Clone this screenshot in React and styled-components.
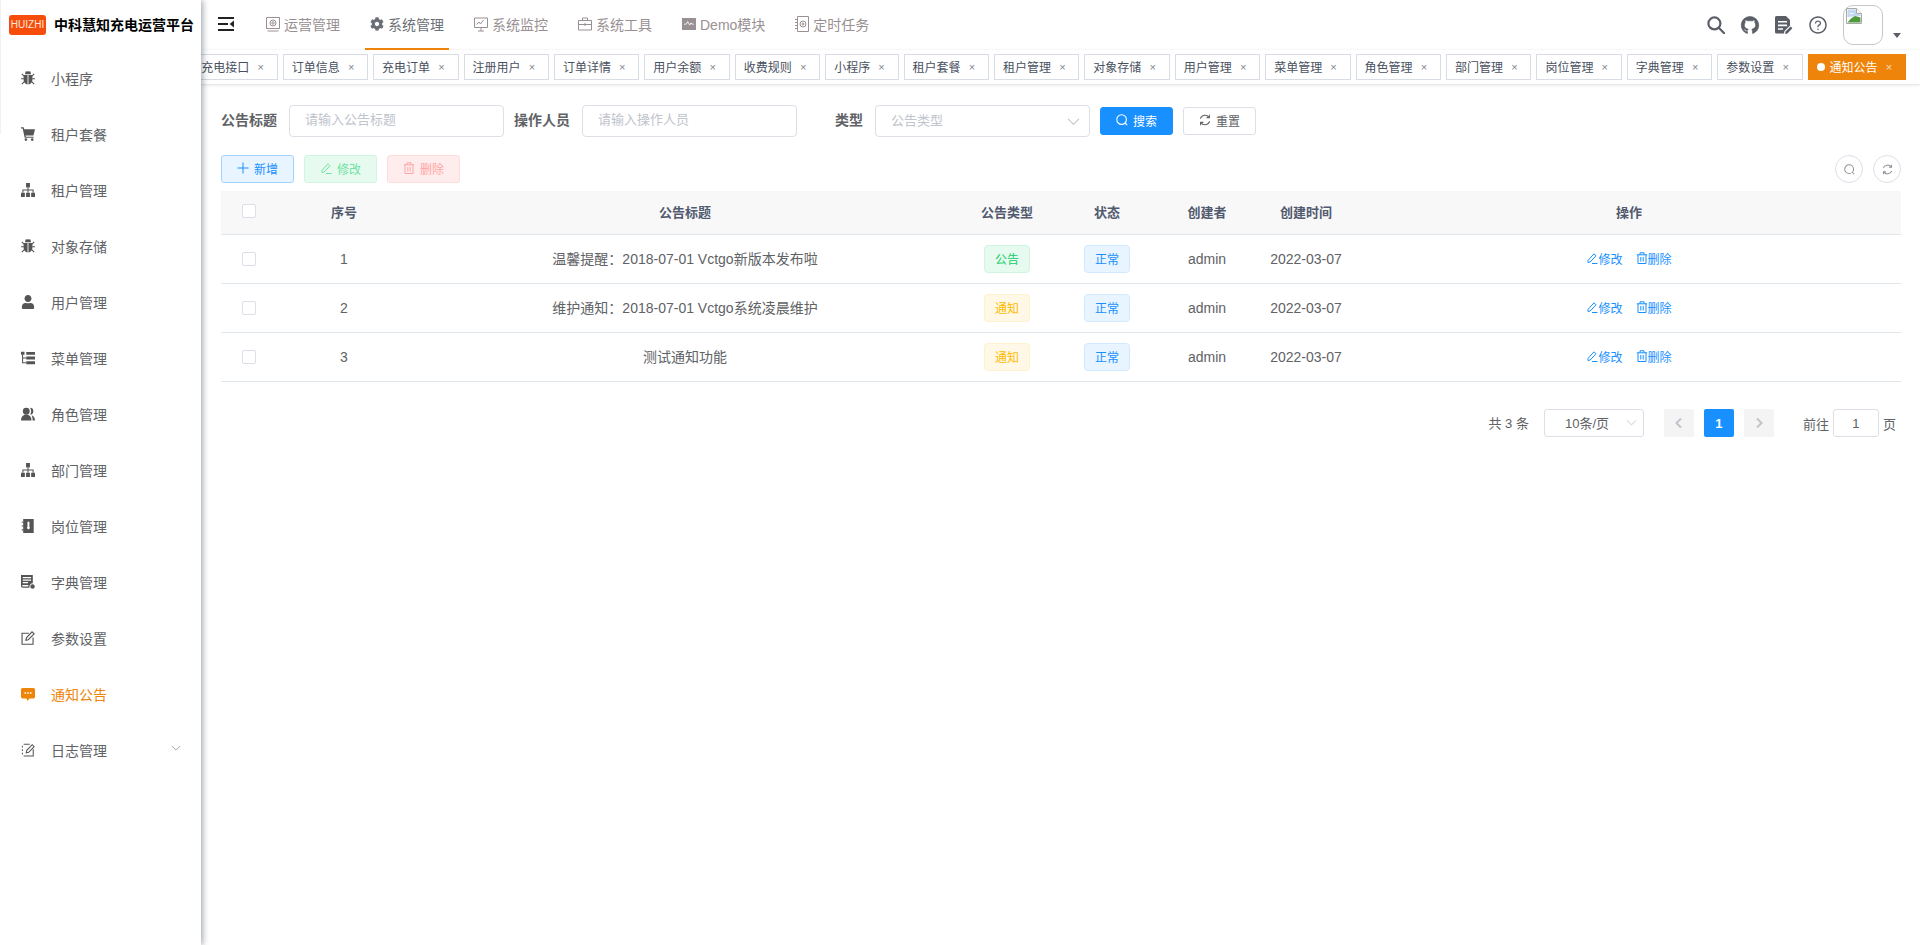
import React from "react"
import styled, { createGlobalStyle } from "styled-components"
import { FaUser, FaCog } from "react-icons/fa"
import { AiOutlineGithub, AiOutlineQuestionCircle } from "react-icons/ai"

const GlobalStyle = createGlobalStyle`
  html, body { margin: 0; padding: 0; height: 100%; background: #fff; }
  body {
    overflow: hidden;
    font-family: "Liberation Sans", "Noto Sans CJK SC", sans-serif;
    color: #606266;
  }
  * { box-sizing: border-box; }
`

// icons

const Svg = styled.svg`
  display: block;
  flex-shrink: 0;
  fill: currentColor;
`

const Line = styled.svg`
  display: block;
  flex-shrink: 0;
  fill: none;
  stroke: currentColor;
  stroke-width: ${p => p.$w || 1};
`

const BugIcon = () => (
  <Svg width="14" height="14" viewBox="0 0 16 16">
    <path d="M4.6 3.8a3.4 3.4 0 0 1 6.800 0z" />
    <path d="M3 4.600h4.500V15.500C5 15.200 3 13.200 3 10.400z" />
    <path d="M8.500 4.600H13v5.800c0 2.800-2 4.800-4.500 5.100z" />
    <path d="M3.400 5.800 1 3.400M3.500 8.800H0M4 11.800 1 14.900M12.600 5.800 15 3.400M12.500 8.800H16M12 11.800l3 3.100M5.400 .6 6.600 2.400M10.600 .6 9.400 2.400" stroke="currentColor" strokeWidth="1.200" fill="none" />
  </Svg>
)

const CartIcon = () => (
  <Svg width="14" height="14" viewBox="0 0 16 16">
    <path d="M0 .4h3l.7 2.200H16l-1.800 7H5.200l.4 1.400h8.800v1.400H4.200L1.900 1.800H0z" />
    <circle cx="5.600" cy="14.400" r="1.500" />
    <circle cx="12.800" cy="14.400" r="1.500" />
  </Svg>
)

const SitemapIcon = () => (
  <Svg width="14" height="14" viewBox="0 0 16 16">
    <path d="M5.800 0h4.400v5H5.800zM0 11h4.400v5H0zM5.800 11h4.400v5H5.800zM11.600 11H16v5h-4.400z" />
    <path d="M8 5v6M2.200 11V8h11.600v3" fill="none" stroke="currentColor" strokeWidth="1.200" />
  </Svg>
)

const PeoplesIcon = () => (
  <Svg width="14" height="14" viewBox="0 0 16 16">
    <circle cx="6" cy="4.800" r="3.900" />
    <path d="M0 15.500c0-4.500 2.500-7 6-7s6 2.500 6 7z" />
    <path d="M10.200 .9a3.900 3.900 0 0 1 0 7.800c.8-1 1.400-2.400 1.400-3.900S11 1.900 10.200.9zM12.300 9.300c2.200.8 3.700 2.900 3.700 6.200h-2.700c0-2.500-.4-4.500-1-6.200z" />
  </Svg>
)

const TreeTableIcon = () => (
  <Svg width="14" height="14" viewBox="0 0 16 16">
    <path d="M0 .8h4v3.400H0zM6 1h10v3.200H6zM6 6.400h10v3.200H6zM6 11.800h10V15H6z" />
    <path d="M1.800 4v9.400h4M1.800 8h4" fill="none" stroke="currentColor" strokeWidth="1.200" />
  </Svg>
)

const PostIcon = () => (
  <Svg width="14" height="14" viewBox="0 0 16 16">
    <path fillRule="evenodd" d="M2.500 0h12v16h-12zM7.400 3.200v5.600a1.600 1.600 0 1 0 2.200 0V3.200z" />
    <path d="M.8 3h2v1.400h-2zM.8 7.300h2v1.400h-2zM.8 11.600h2V13h-2z" />
  </Svg>
)

const DictIcon = () => (
  <Svg width="14" height="14" viewBox="0 0 16 16">
    <path fillRule="evenodd" d="M0 0h13.500v9.500a4 4 0 0 0-3.800 5H2a2 2 0 0 1-2-2zM2 2.400v1.400h9.500V2.400zM2 5.200v1.400h9.500V5.200zM2 8v1.400h6V8zM2 11.400a1 1 0 0 0 0 1.800h6.400v-1.800z" />
    <circle cx="13.200" cy="13.200" r="2.500" />
  </Svg>
)

const FormIcon = () => (
  <Line width="14" height="14" viewBox="0 0 16 16" $w={1.3}>
    <path d="M9 2.600H1.200v12.600h12.600V7.400" />
    <path d="M5.600 10.600 6.200 7.800 12.600 1l2.400 2.200-6.600 6.800z" />
  </Line>
)

const MessageIcon = () => (
  <Svg width="14" height="14" viewBox="0 0 16 16">
    <path fillRule="evenodd" d="M1.800 1h12.400A1.800 1.800 0 0 1 16 2.800v8.400a1.800 1.800 0 0 1-1.800 1.800H9.600L7.600 16l-1.400-3H1.800A1.800 1.800 0 0 1 0 11.200V2.800A1.800 1.800 0 0 1 1.800 1zM4 6v1.800h1.800V6zM7.100 6v1.800h1.800V6zM10.200 6v1.800H12V6z" />
  </Svg>
)

const LogIcon = () => (
  <Line width="14" height="14" viewBox="0 0 16 16" $w={1.2}>
    <path d="M3 1.400h7M14 7v7.800H3M1.600 3v2M1.600 7v2M1.600 11v2" />
    <path d="M6 11.200 6.600 8.400 12.800 2l2.200 2.200-6.200 6.400z" />
  </Line>
)

const GuideIcon = () => (
  <Line width="14" height="16" viewBox="0 0 14 16">
    <path d="M.5 1.500h13v11H.5zM1.500 15h11" />
    <circle cx="7" cy="7" r="3" />
    <circle cx="7" cy="7" r="1.200" />
  </Line>
)

const MonitorIcon = () => (
  <Line width="14" height="15" viewBox="0 0 14 15">
    <path d="M.5 1h13v9.500H.5zM7 10.500V14M4 14h6" />
    <path d="M2.500 7.500 5 5l1.500 2L9.500 3" />
  </Line>
)

const ToolIcon = () => (
  <Line width="14" height="14" viewBox="0 0 14 14">
    <path d="M.5 3.500h13v9.500H.5zM4.500 3.500V1h5v2.500M.5 7.500h13M7 6v3" />
  </Line>
)

const DemoIcon = () => (
  <Svg width="14" height="14" viewBox="0 0 14 14">
    <path fillRule="evenodd" d="M0 1h14v12H0zM2 7.600h2.400L5.800 5.400 7.600 8.600 9 6.800l1 .8h2V6.800h-1.600L9 5.600 7.600 7.200 5.800 4 4 6.800H2z" />
  </Svg>
)

const JobIcon = () => (
  <Line width="14" height="16" viewBox="0 0 14 16">
    <path d="M2.500.5h11v15h-11zM0 3.500h2.500M0 6.500h2.500M0 9.500h2.500M0 12.500h2.500" />
    <circle cx="8" cy="8" r="3" />
    <circle cx="8" cy="8" r="1" />
  </Line>
)

const HamburgerIcon = () => (
  <Svg width="16" height="14" viewBox="0 0 16 14">
    <path d="M0 0h16v2H0zM0 6h10v2H0zM0 12h16v2H0zM16 3.600v6.800L11.600 7z" />
  </Svg>
)

const SearchBigIcon = () => (
  <Line width="18" height="18" viewBox="0 0 18 18" $w={2.2}>
    <circle cx="7.400" cy="7.400" r="6" />
    <path d="m11.800 11.800 5.400 5.400" strokeLinecap="round" />
  </Line>
)

const DocPenIcon = () => (
  <Svg width="18" height="18" viewBox="0 0 18 18">
    <path fillRule="evenodd" d="M1.500 0h9.500L15 4v5.500l-5.500 5.600-.6 2.400H1.500A1.500 1.500 0 0 1 0 16V1.500A1.500 1.500 0 0 1 1.500 0zM3 5v1.600h9V5zM3 8.600v1.600h9V8.600zM3 12.200v1.600h5v-1.600z" />
    <path d="m10.600 15.600 5-5.200 1.800 1.800-5 5.200-2.400.5z" />
  </Svg>
)

const BrokenImage = () => (
  <svg width="16" height="16" viewBox="0 0 16 16">
    <path d="M.5.500h10l5 5v10H.5z" fill="#fff" stroke="#a8a8a8" />
    <path d="M1.500 1.500h8.500v4.500h4.500v2L1.500 9z" fill="#c4d8f2" />
    <path d="M3 6c2-1.600 4-1.200 5 0H3z" fill="#fff" />
    <path d="M1.500 14.500h13V9.500L9 8 5 10.500z" fill="#4f9a3c" />
    <path d="M10.500 .5v5h5" fill="#fff" stroke="#a8a8a8" />
  </svg>
)

const PlusIcon = () => (
  <Line width="12" height="12" viewBox="0 0 12 12">
    <path d="M6 .5v11M.5 6h11" />
  </Line>
)

const EditIcon = () => (
  <Line width="12" height="12" viewBox="0 0 12 12">
    <path d="M2 8.400 2 10.500 4.200 10 10 3.800 8 1.800zM6 11.500h5.500" />
  </Line>
)

const DeleteIcon = () => (
  <Line width="12" height="12" viewBox="0 0 12 12">
    <path d="M.8 2.800h10.400M4 2.800V.8h4v2M2 2.800v8.700h8V2.800M4.800 5v4.500M7.200 5v4.500" />
  </Line>
)

const SearchIcon = () => (
  <Line width="12" height="12" viewBox="0 0 12 12" $w={1.1}>
    <circle cx="5.600" cy="5.600" r="4.800" />
    <path d="m9 9 2.200 2.200" />
  </Line>
)

const RefreshIcon = () => (
  <Line width="12" height="12" viewBox="0 0 12 12" $w={1.1}>
    <path d="M1.400 4.600A4.800 4.800 0 0 1 10 3.400M10.600 7.400A4.800 4.800 0 0 1 2 8.600" />
    <path d="M10.400 .8v2.800H7.600M1.600 11.200V8.400h2.800" />
  </Line>
)

const Chevron = ({ size = 12, dir = "down" }) => (
  <Line width={size} height={size} viewBox="0 0 12 12">
    {dir === "down" && <path d="M1 3.600 6 8.600l5-5" />}
    {dir === "left" && <path d="M8 1.500 3.500 6 8 10.500" strokeWidth="2" />}
    {dir === "right" && <path d="M4 1.500 8.500 6 4 10.500" strokeWidth="2" />}
  </Line>
)

// data

const sideItems = [
  { label: "小程序", icon: <BugIcon /> },
  { label: "租户套餐", icon: <CartIcon /> },
  { label: "租户管理", icon: <SitemapIcon /> },
  { label: "对象存储", icon: <BugIcon /> },
  { label: "用户管理", icon: <FaUser size={14} /> },
  { label: "菜单管理", icon: <TreeTableIcon /> },
  { label: "角色管理", icon: <PeoplesIcon /> },
  { label: "部门管理", icon: <SitemapIcon /> },
  { label: "岗位管理", icon: <PostIcon /> },
  { label: "字典管理", icon: <DictIcon /> },
  { label: "参数设置", icon: <FormIcon /> },
  { label: "通知公告", icon: <MessageIcon />, active: true },
  { label: "日志管理", icon: <LogIcon />, sub: true },
]

const topItems = [
  { label: "运营管理", icon: <GuideIcon /> },
  { label: "系统管理", icon: <FaCog size={14} />, active: true },
  { label: "系统监控", icon: <MonitorIcon /> },
  { label: "系统工具", icon: <ToolIcon /> },
  { label: "Demo模块", icon: <DemoIcon /> },
  { label: "定时任务", icon: <JobIcon /> },
]

const tabs = [
  "充电接口", "订单信息", "充电订单", "注册用户", "订单详情", "用户余额", "收费规则",
  "小程序", "租户套餐", "租户管理", "对象存储", "用户管理", "菜单管理", "角色管理",
  "部门管理", "岗位管理", "字典管理", "参数设置",
]

const notices = [
  { id: 1, title: "温馨提醒：2018-07-01 Vctgo新版本发布啦", type: "公告", tone: "success" },
  { id: 2, title: "维护通知：2018-07-01 Vctgo系统凌晨维护", type: "通知", tone: "warning" },
  { id: 3, title: "测试通知功能", type: "通知", tone: "warning" },
]

const tones = {
  primary: { bg: "#e8f4ff", border: "#d1e9ff", color: "#1890ff" },
  success: { bg: "#e7faf0", border: "#d0f5e0", color: "#13ce66" },
  warning: { bg: "#fff8e6", border: "#fff1cc", color: "#ffba00" },
}

const App = () => (
  <Page>
    <GlobalStyle />
    <Sidebar>
      <Brand>
        <BrandLogo>HUIZHI</BrandLogo>
        <BrandTitle>中科慧知充电运营平台</BrandTitle>
      </Brand>
      {sideItems.map(item => (
        <SideItem key={item.label} $active={item.active}>
          {item.icon}
          <SideLabel $active={item.active}>{item.label}</SideLabel>
          {item.sub && (
            <SideArrow>
              <Chevron size={10} />
            </SideArrow>
          )}
        </SideItem>
      ))}
    </Sidebar>

    <Main>
      <Navbar>
        <Hamburger>
          <HamburgerIcon />
        </Hamburger>
        <TopMenu>
          {topItems.map(item => (
            <TopItem key={item.label} $active={item.active}>
              {item.icon}
              {item.label}
            </TopItem>
          ))}
        </TopMenu>
        <RightMenu>
          <SearchBigIcon />
          <IconSlot $bold>
            <AiOutlineGithub size={20} />
          </IconSlot>
          <DocPenIcon />
          <IconSlot>
            <AiOutlineQuestionCircle size={20} />
          </IconSlot>
          <Avatar>
            <BrokenImage />
          </Avatar>
          <Caret />
        </RightMenu>
      </Navbar>

      <TabBar>
        {tabs.map(t => (
          <Tab key={t}>
            {t}
            <TabClose>×</TabClose>
          </Tab>
        ))}
        <Tab $active>
          <TabDot />
          通知公告
          <TabClose>×</TabClose>
        </Tab>
      </TabBar>

      <Content>
        <SearchForm>
          <FormItem>
            <FormLabel>公告标题</FormLabel>
            <TextInput readOnly placeholder="请输入公告标题" />
          </FormItem>
          <FormItem>
            <FormLabel>操作人员</FormLabel>
            <TextInput readOnly placeholder="请输入操作人员" />
          </FormItem>
          <FormItem>
            <FormLabel>类型</FormLabel>
            <SelectBox>
              <SelectText>公告类型</SelectText>
              <Chevron size={13} />
            </SelectBox>
          </FormItem>
          <Button $solid>
            <SearchIcon />
            搜索
          </Button>
          <Button>
            <RefreshIcon />
            重置
          </Button>
        </SearchForm>

        <Toolbar>
          <Button $bg="#e8f4ff" $border="#a3d3ff" $color="#1890ff">
            <PlusIcon />
            新增
          </Button>
          <Button $bg="#e7faf0" $border="#d0f5e0" $color="#71e2a3">
            <EditIcon />
            修改
          </Button>
          <Button $bg="#ffeded" $border="#ffdbdb" $color="#ffa4a4">
            <DeleteIcon />
            删除
          </Button>
          <ToolRight>
            <RoundButton>
              <SearchIcon />
            </RoundButton>
            <RoundButton>
              <RefreshIcon />
            </RoundButton>
          </ToolRight>
        </Toolbar>

        <TableHead>
          <Cell>
            <Checkbox />
          </Cell>
          <Cell>序号</Cell>
          <Cell>公告标题</Cell>
          <Cell>公告类型</Cell>
          <Cell>状态</Cell>
          <Cell>创建者</Cell>
          <Cell>创建时间</Cell>
          <Cell>操作</Cell>
        </TableHead>
        {notices.map(n => (
          <TableRow key={n.id}>
            <Cell>
              <Checkbox />
            </Cell>
            <Cell>{n.id}</Cell>
            <TitleCell>{n.title}</TitleCell>
            <Cell>
              <Badge $tone={n.tone}>{n.type}</Badge>
            </Cell>
            <Cell>
              <Badge $tone="primary">正常</Badge>
            </Cell>
            <Cell>admin</Cell>
            <Cell>2022-03-07</Cell>
            <ActionCell>
              <RowAction>
                <EditIcon />
                修改
              </RowAction>
              <RowAction>
                <DeleteIcon />
                删除
              </RowAction>
            </ActionCell>
          </TableRow>
        ))}

        <Pagination>
          <PageTotal>共 3 条</PageTotal>
          <PageSize>
            10条/页
            <Chevron size={11} />
          </PageSize>
          <Pager>
            <PageButton>
              <Chevron size={12} dir="left" />
            </PageButton>
            <PageButton $active>1</PageButton>
            <PageButton>
              <Chevron size={12} dir="right" />
            </PageButton>
          </Pager>
          <Jump>
            前往
            <JumpInput>1</JumpInput>
            页
          </Jump>
        </Pagination>
      </Content>
    </Main>
  </Page>
)

export default App

//Styled

const Page = styled.div`
  display: flex;
  height: 945px;
  overflow: hidden;
`

const Sidebar = styled.aside`
  position: relative;
  z-index: 10;
  flex: 0 0 201px;
  background: #fff;
  box-shadow: 2px 0 6px rgba(0, 21, 41, 0.35);

  &::before {
    content: "";
    position: absolute;
    left: 0;
    top: 0;
    width: 1px;
    height: 134px;
    background: #f1f1f1;
  }
`

const Brand = styled.div`
  display: flex;
  align-items: center;
  gap: 8px;
  height: 50px;
  padding-left: 9px;
`

const BrandLogo = styled.div`
  flex: 0 0 37px;
  height: 20px;
  line-height: 20px;
  border-radius: 3px;
  background: #f64c0c;
  color: #ffe9df;
  font-size: 10px;
  text-align: center;
`

const BrandTitle = styled.h1`
  margin: 0 0 2px;
  font-size: 14px;
  font-weight: 700;
  color: #000;
  white-space: nowrap;
`

const SideItem = styled.div`
  display: flex;
  align-items: center;
  height: 56px;
  padding-left: 21px;
  font-size: 14px;
  color: ${p => (p.$active ? "#ee850a" : "#555")};
`

const SideLabel = styled.span`
  margin-left: 16px;
  color: ${p => (p.$active ? "#ee850a" : "#606266")};
`

const SideArrow = styled.span`
  margin: -5px 20px 0 auto;
  color: #909399;
`

const Main = styled.main`
  flex: 1;
  min-width: 0;
`

const Navbar = styled.header`
  display: flex;
  align-items: center;
  height: 50px;
  background: #fff;
  box-shadow: 0 1px 4px rgba(0, 21, 41, 0.08);
`

const Hamburger = styled.div`
  flex: 0 0 60px;
  padding-left: 17px;
  color: #222;
  margin-top: -2px;
`

const TopMenu = styled.nav`
  display: flex;
  gap: 20px;
  height: 50px;
`

const TopItem = styled.div`
  display: flex;
  align-items: center;
  gap: 4px;
  height: 50px;
  padding: 0 5px;
  font-size: 14px;
  white-space: nowrap;
  color: ${p => (p.$active ? "#6b6f76" : "#999093")};
  border-bottom: 2px solid ${p => (p.$active ? "#ee850a" : "transparent")};
`

const RightMenu = styled.div`
  display: flex;
  align-items: center;
  gap: 16px;
  margin-left: auto;
  padding-right: 19px;
  color: #5a5e66;
`

const IconSlot = styled.span`
  display: flex;
  align-items: center;
  justify-content: center;
  width: 18px;
  height: 18px;

  svg {
    flex-shrink: 0;
    ${p => (p.$bold ? "stroke: currentColor; stroke-width: 30;" : "")}
  }
`

const Avatar = styled.div`
  width: 40px;
  height: 40px;
  padding: 2px;
  border: 1px solid #c8c8c8;
  border-radius: 10px;
`

const Caret = styled.span`
  width: 0;
  height: 0;
  margin: 20px 0 0 -6px;
  border-left: 4.5px solid transparent;
  border-right: 4.5px solid transparent;
  border-top: 5px solid #5a5e66;
`

const TabBar = styled.div`
  display: flex;
  justify-content: flex-end;
  align-items: center;
  gap: 5px;
  height: 34px;
  padding-right: 14px;
  overflow: hidden;
  background: #fff;
  box-shadow: 0 1px 3px 0 rgba(0, 0, 0, 0.12), 0 0 3px 0 rgba(0, 0, 0, 0.04);
`

const Tab = styled.div`
  display: flex;
  flex-shrink: 0;
  align-items: center;
  height: 26px;
  padding: 0 8px 1px;
  border: 1px solid ${p => (p.$active ? "#ee850a" : "#d8dce5")};
  background: ${p => (p.$active ? "#ee850a" : "#fff")};
  color: ${p => (p.$active ? "#fff" : "#495060")};
  font-size: 12px;
  white-space: nowrap;
`

const TabClose = styled.span`
  width: 16px;
  margin-left: 3.4px;
  text-align: center;
  font-size: 11px;
  opacity: 0.7;
`

const TabDot = styled.span`
  width: 8px;
  height: 8px;
  margin-right: 5px;
  border-radius: 50%;
  background: #fff;
`

const Content = styled.section`
  padding: 21px 19px 0 20px;
`

const SearchForm = styled.div`
  display: flex;
  align-items: center;
  height: 32px;
  margin-bottom: 18px;
`

const FormItem = styled.div`
  display: flex;
  align-items: center;
  margin-right: 10px;
`

const FormLabel = styled.label`
  width: 68px;
  padding: 0 12px 4px 0;
  text-align: right;
  font-size: 14px;
  font-weight: 700;
  color: #606266;
`

const TextInput = styled.input`
  width: 215px;
  height: 32px;
  padding: 0 15px 3px;
  border: 1px solid #dcdfe6;
  border-radius: 4px;
  outline: none;
  font: 13px "Liberation Sans", "Noto Sans CJK SC", sans-serif;

  &::placeholder {
    color: #c0c4cc;
    opacity: 1;
  }
`

const SelectBox = styled.div`
  display: flex;
  align-items: center;
  justify-content: space-between;
  width: 215px;
  height: 32px;
  padding: 0 9px 0 15px;
  border: 1px solid #dcdfe6;
  border-radius: 4px;
  font-size: 13px;
  color: #c0c4cc;
`

const SelectText = styled.span`
  margin-top: -3px;
`

const Button = styled.div`
  display: flex;
  align-items: center;
  justify-content: center;
  gap: 5px;
  width: 73px;
  height: 28px;
  padding-bottom: 2px;
  border-radius: 3px;
  font-size: 12px;
  background: ${p => (p.$solid ? "#1890ff" : p.$bg || "#fff")};
  border: 1px solid ${p => (p.$solid ? "#1890ff" : p.$border || "#dcdfe6")};
  color: ${p => (p.$solid ? "#fff" : p.$color || "#606266")};

  & + & {
    margin-left: 10px;
  }
`

const Toolbar = styled.div`
  display: flex;
  align-items: center;
  height: 28px;
  margin-bottom: 8px;
`

const ToolRight = styled.div`
  display: flex;
  gap: 10px;
  margin-left: auto;
`

const RoundButton = styled.div`
  display: flex;
  align-items: center;
  justify-content: center;
  width: 28px;
  height: 28px;
  border: 1px solid #dcdfe6;
  border-radius: 50%;
  color: #909399;

  svg {
    width: 11px;
    height: 11px;
  }
`

const Cell = styled.div`
  display: flex;
  align-items: center;
  justify-content: center;
`

const TitleCell = styled(Cell)`
  padding-bottom: 2px;
`

const ActionCell = styled(Cell)`
  gap: 13px;
`

const TableHead = styled.div`
  display: grid;
  grid-template-columns: 56px 134px 548px 96px 104px 96px 102px 1fr;
  height: 44px;
  padding-bottom: 3px;
  border-bottom: 1px solid #dfe6ec;
  background: #f8f8f9;
  font-size: 13px;
  font-weight: 700;
  color: #515a6e;
`

const TableRow = styled.div`
  display: grid;
  grid-template-columns: 56px 134px 548px 96px 104px 96px 102px 1fr;
  height: 49px;
  border-bottom: 1px solid #dfe6ec;
  font-size: 14px;
  color: #606266;
`

const Checkbox = styled.span`
  width: 14px;
  height: 14px;
  border: 1px solid #dcdfe6;
  border-radius: 2px;
  background: #fff;
`

const Badge = styled.span`
  display: flex;
  align-items: center;
  justify-content: center;
  width: 46px;
  height: 28px;
  padding-bottom: 2px;
  border-radius: 4px;
  font-size: 12px;
  background: ${p => tones[p.$tone].bg};
  border: 1px solid ${p => tones[p.$tone].border};
  color: ${p => tones[p.$tone].color};
`

const RowAction = styled.span`
  display: flex;
  align-items: center;
  padding-bottom: 2px;
  font-size: 12px;
  color: #1890ff;
`

const Pagination = styled.div`
  display: flex;
  align-items: center;
  justify-content: flex-end;
  height: 28px;
  margin-top: 27px;
  padding-right: 5px;
  font-size: 13px;
  color: #606266;
`

const PageTotal = styled.span`
  margin-top: -2px;
`

const PageSize = styled.div`
  display: flex;
  align-items: center;
  justify-content: space-between;
  width: 100px;
  height: 28px;
  margin-left: 15px;
  padding: 0 6px 2px 20px;
  border: 1px solid #dcdfe6;
  border-radius: 3px;

  svg {
    color: #c0c4cc;
  }
`

const Pager = styled.div`
  display: flex;
  gap: 10px;
  margin-left: 20px;
`

const PageButton = styled.div`
  display: flex;
  align-items: center;
  justify-content: center;
  width: 30px;
  height: 28px;
  border-radius: 2px;
  font-weight: 700;
  background: ${p => (p.$active ? "#1890ff" : "#f4f4f5")};
  color: ${p => (p.$active ? "#fff" : "#c0c4cc")};
`

const Jump = styled.div`
  display: flex;
  align-items: center;
  gap: 4px;
  margin-left: 29px;
`

const JumpInput = styled.div`
  display: flex;
  align-items: center;
  justify-content: center;
  width: 46px;
  height: 28px;
  border: 1px solid #dcdfe6;
  border-radius: 3px;
`
